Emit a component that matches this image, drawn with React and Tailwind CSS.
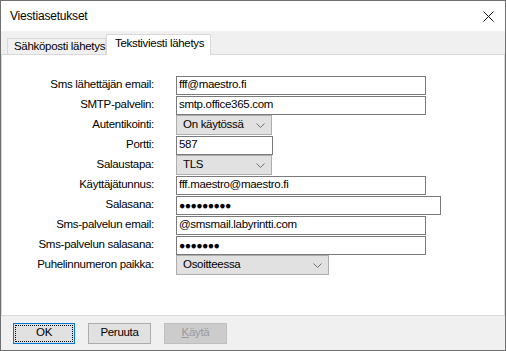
import React from 'react';

const Chevron = () => (
    <svg width="9" height="5" viewBox="0 0 9 5" className="shrink-0">
        <path d="M0.5 0.5 L4.5 4.5 L8.5 0.5" fill="none" stroke="#707070" strokeWidth="1" />
    </svg>
);

const TextBox = ({ value, width, dots }) => (
    <div className={`h-[19px] border border-[#7a7a7a] bg-white flex items-center pl-[2px] ${width}`}>
        {dots ? (
            <span className="text-[10.5px] tracking-[-0.6px] leading-none">{value}</span>
        ) : (
            <span className="leading-none whitespace-nowrap">{value}</span>
        )}
    </div>
);

const Select = ({ value, width }) => (
    <div className={`h-[20px] border border-[#adadad] bg-[#e1e1e1] flex items-center justify-between pl-[6px] pr-[6px] ${width}`}>
        <span className="leading-none whitespace-nowrap">{value}</span>
        <Chevron />
    </div>
);

const Row = ({ label, children }) => (
    <div className="h-[20px] flex items-center">
        <div className="w-[152px] text-right leading-none whitespace-nowrap">{label}</div>
        <div className="ml-[22px]">{children}</div>
    </div>
);

export default function App() {
    return (
        <div className="w-[506px] h-[351px] border border-[#6f6f6f] bg-[#f0f0f0] flex flex-col text-[11.5px] tracking-[-0.3px] text-black font-['Segoe_UI','Liberation_Sans',Arial,sans-serif]">
            {/* Title bar */}
            <div className="h-[30px] bg-white flex items-center justify-between pl-[9px] pr-[11px]">
                <span className="text-[12px] tracking-[-0.2px]">Viestiasetukset</span>
                <svg width="11" height="11" viewBox="0 0 11 11">
                    <path d="M0.5 0.5 L10.5 10.5 M10.5 0.5 L0.5 10.5" stroke="#111" strokeWidth="1" />
                </svg>
            </div>

            {/* Tabs */}
            <div className="h-[23px] flex items-end pl-[6px]">
                <div className="h-[16px] w-[99px] border border-b-0 border-[#d9d9d9] bg-[#f0f0f0] flex items-center pl-[6px] leading-none whitespace-nowrap">
                    Sähköposti lähetys
                </div>
                <div className="relative top-[1px] z-10 h-[21px] w-[105px] border border-b-0 border-[#d9d9d9] bg-white flex items-center pl-[8px] pb-[2px] leading-none whitespace-nowrap">
                    Tekstiviesti lähetys
                </div>
            </div>

            {/* Content panel */}
            <div className="flex-1 bg-white border border-[#d9d9d9] pt-[20px] flex flex-col">
                <Row label="Sms lähettäjän email:"><TextBox value="fff@maestro.fi" width="w-[250px]" /></Row>
                <Row label="SMTP-palvelin:"><TextBox value="smtp.office365.com" width="w-[250px]" /></Row>
                <Row label="Autentikointi:"><Select value="On käytössä" width="w-[96px]" /></Row>
                <Row label="Portti:"><TextBox value="587" width="w-[97px]" /></Row>
                <Row label="Salaustapa:"><Select value="TLS" width="w-[96px]" /></Row>
                <Row label="Käyttäjätunnus:"><TextBox value="fff.maestro@maestro.fi" width="w-[250px]" /></Row>
                <Row label="Salasana:"><TextBox value="●●●●●●●●●" width="w-[265px]" dots /></Row>
                <Row label="Sms-palvelun email:"><TextBox value="@smsmail.labyrintti.com" width="w-[250px]" /></Row>
                <Row label="Sms-palvelun salasana:"><TextBox value="●●●●●●●" width="w-[250px]" dots /></Row>
                <Row label="Puhelinnumeron paikka:"><Select value="Osoitteessa" width="w-[153px]" /></Row>
            </div>

            {/* Buttons */}
            <div className="h-[34px] flex items-center pl-[12px] gap-[13px]">
                <div className="w-[62px] h-[21px] border border-[#0078d7] bg-[#e1e1e1] p-[1px]">
                    <div className="w-full h-full border border-dotted border-black flex items-center justify-center leading-none">
                        OK
                    </div>
                </div>
                <div className="w-[63px] h-[21px] border border-[#adadad] bg-[#e1e1e1] flex items-center justify-center leading-none">
                    Peruuta
                </div>
                <div className="w-[63px] h-[21px] border border-[#bfbfbf] bg-[#cccccc] flex items-center justify-center leading-none text-[#9a9a9a]">
                    <span><span className="underline">K</span>äytä</span>
                </div>
            </div>
        </div>
    );
}
